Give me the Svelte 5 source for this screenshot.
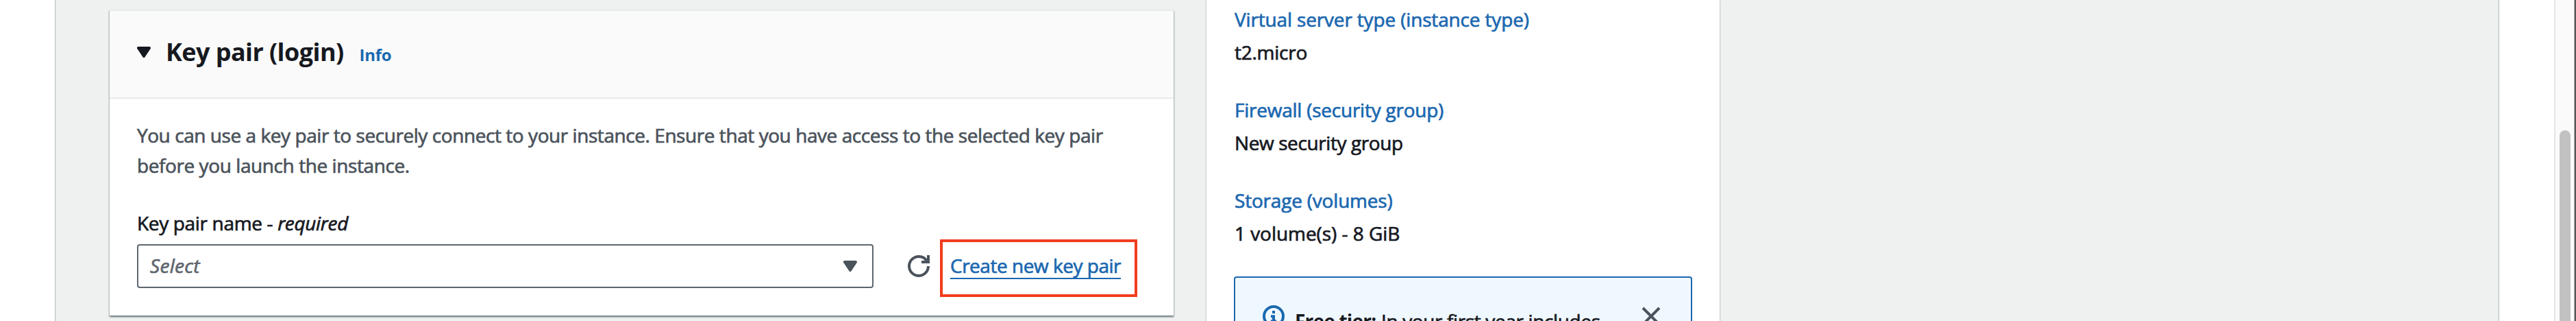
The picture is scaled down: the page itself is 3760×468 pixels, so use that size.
<script>
  const summary = [
    { label: 'Virtual server type (instance type)', value: 't2.micro', ls: -0.16, vs: -0.25 },
    { label: 'Firewall (security group)', value: 'New security group', ls: -0.24, vs: -0.4 },
    { label: 'Storage (volumes)', value: '1 volume(s) - 8 GiB', ls: -0.2, vs: -0.05 }
  ];
</script>

{#snippet caret(color)}
  <svg class="caret" viewBox="3 4 10 8" width="20" height="16">
    <path d="M4 5h8l-4 6z" fill={color} stroke={color} stroke-width="2" stroke-linejoin="round" />
  </svg>
{/snippet}

<div class="page">
  <aside class="gutter left"></aside>
  <main class="content">
    <section class="card">
      <header>
        {@render caret('#16191f')}
        <h2>Key pair (login)</h2>
        <a class="info">Info</a>
      </header>
      <div class="body">
        <p class="first">You can use a key pair to securely connect to your instance. Ensure that you have access to the selected key pair</p>
        <p class="second">before you launch the instance.</p>
        <div class="label"><span>Key pair name -&nbsp;</span><em>required</em></div>
        <div class="row">
          <div class="select">
            <em>Select</em>
            {@render caret('#4b535c')}
          </div>
          <svg class="refresh" viewBox="0 0 16 16" width="32" height="32" fill="none" stroke="#4b535c" stroke-width="2">
            <path d="M15 8c0 3.87-3.13 7-7 7s-7-3.13-7-7 3.13-7 7-7c2.79 0 5.2 1.63 6.33 4" />
            <path d="M10 5h5V0" />
          </svg>
          <div class="create">
            <a>Create new key pair</a>
            <span class="highlight"></span>
          </div>
        </div>
      </div>
    </section>

    <section class="summary">
      {#each summary as item}
        <div class="item">
          <a style="letter-spacing: {item.ls}px">{item.label}</a>
          <span style="letter-spacing: {item.vs}px">{item.value}</span>
        </div>
      {/each}
      <div class="alert">
        <svg viewBox="0 0 16 16" width="32" height="32">
          <circle cx="8" cy="8" r="7" fill="none" stroke="#1b68b0" stroke-width="2" />
          <path d="M7 4h2v2H7zM6 7.1h3v3.5h1v2H6v-2h1V9.1H6z" fill="#1b68b0" />
        </svg>
        <div class="message"><b>Free tier:</b><span>In your first year includes</span></div>
        <svg class="close" viewBox="0 0 16 16" width="32" height="32">
          <path d="M2 2l12 12M14 2L2 14" stroke="#4b535c" stroke-width="2" />
        </svg>
      </div>
    </section>
  </main>
  <aside class="gutter right"></aside>
  <div class="scrollbar"><div class="thumb"></div></div>
  <div class="edge"></div>
</div>

<style>
  :global(body) { margin: 0; overflow: hidden; }
  .page {
    display: flex;
    width: 3760px;
    height: 468px;
    overflow: hidden;
    background: #fff;
    color: #16191f;
    font: 400 28px/44px "Open Sans", "Noto Sans", sans-serif;
    -webkit-text-stroke: 0.7px currentColor;
    white-space: nowrap;
    box-sizing: border-box;
  }
  .page :global(*) { box-sizing: border-box; }
  svg { display: block; flex: none; }
  a { color: #1b68b0; }
  h2, p { margin: 0; }
  .gutter { flex: none; width: 80px; background: #fff; }
  .content {
    flex: none;
    width: 3568px;
    display: flex;
    align-items: flex-start;
    background: #eff1f1;
    border: solid #bfc5c9;
    border-width: 0 1px;
    box-shadow: inset 1px 0 #dde1e3, inset -1px 0 #dde1e3;
  }
  .card {
    width: 1553px;
    height: 446px;
    margin: 14px 0 0 79px;
    background: #fff;
    border-top: 2px solid #e7eaea;
    box-shadow: 0 2px 2px rgba(0, 28, 36, 0.3), 1px 2px 2px rgba(0, 28, 36, 0.2), -1px 2px 2px rgba(0, 28, 36, 0.2);
  }
  header {
    height: 128px;
    padding: 37px 40px 0;
    display: flex;
    align-items: flex-start;
    background: #fafafa;
    border-bottom: 2px solid #e7eaea;
  }
  header .caret { margin-top: 15px; }
  h2 { margin: 1px 0 0 22px; font-size: 36px; font-weight: 700; line-height: 44px; letter-spacing: -0.58px; -webkit-text-stroke: 0; }
  .info { margin: 5px 0 0 23px; font-size: 24px; font-weight: 700; letter-spacing: -0.3px; -webkit-text-stroke: 0; }
  .body { padding: 31px 40px 0; }
  p { color: #4b535c; }
  .first { letter-spacing: -0.44px; }
  .second { letter-spacing: -0.42px; }
  .label { display: flex; margin-top: 40px; letter-spacing: -0.34px; }
  .row { display: flex; align-items: center; height: 64px; margin-top: 9px; }
  .select {
    width: 1075px;
    height: 64px;
    display: flex;
    align-items: center;
    justify-content: space-between;
    padding: 0 22px 0 17px;
    border: 2px solid #5e666f;
    border-radius: 4px;
    color: #5e666f;
  }
  .select em { letter-spacing: 0.3px; margin-top: -2px; }
  .refresh { margin-left: 50px; }
  .create { position: relative; margin: -2px 0 0 30px; height: 44px; }
  .create a { display: block; height: 42px; border-bottom: 2px solid #1b68b0; letter-spacing: -0.48px; }
  .highlight { position: absolute; left: -15px; top: -16px; width: 288px; height: 84px; border: 4px solid #f23d1e; }
  .summary {
    width: 749px;
    height: 480px;
    margin-left: 48px;
    padding: 6px 40px 0;
    background: #fff;
    box-shadow: 0 0 2px rgba(0, 28, 36, 0.5);
  }
  .item { display: flex; flex-direction: column; gap: 4px; margin-bottom: 40px; }
  .item a, .item span { padding-left: 1px; }
  .alert {
    display: flex;
    align-items: flex-start;
    height: 130px;
    margin-top: 41px;
    padding: 40px 42px 0 40px;
    border: 2px solid #1b68b0;
    border-radius: 4px;
    background: #f0f8ff;
  }
  .message { display: flex; margin: 1px 0 0 15px; }
  b { width: 126px; font-weight: 700; letter-spacing: -0.8px; -webkit-text-stroke: 0; }
  .message span { letter-spacing: -0.37px; }
  .close { margin-left: auto; }
  .scrollbar {
    flex: none;
    width: 30px;
    padding: 190px 0 0 6px;
    background: #fafafa;
    border-left: 2px solid #e4e4e4;
    border-right: 2px solid #ececec;
  }
  .thumb { width: 16px; height: 300px; border-radius: 8px; background: #c1c1c1; }
  .edge { flex: none; width: 2px; background: #8c8c8c; border-left: 1px solid #000; }
</style>
